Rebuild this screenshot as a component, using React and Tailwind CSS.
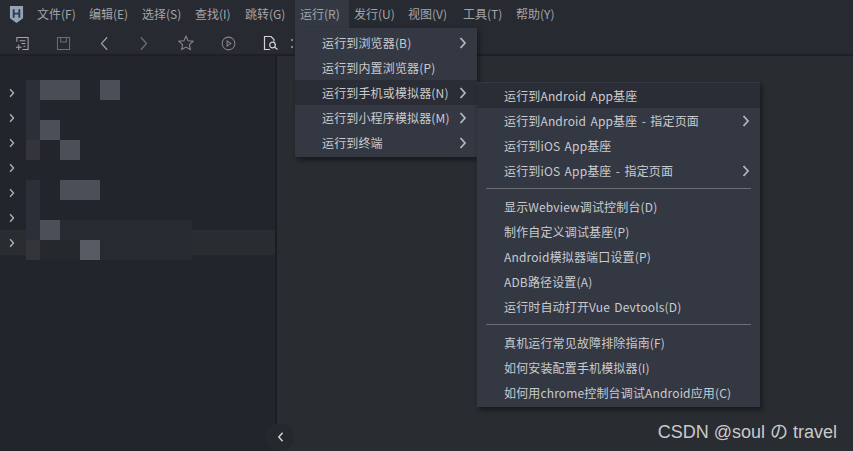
import React from 'react';

const cjk = 'font-["Noto_Sans_CJK_SC","Noto_Sans",sans-serif]';

const menus = [
  { label: '文件(F)', w: 'w-[52px]' },
  { label: '编辑(E)', w: 'w-[53px]' },
  { label: '选择(S)', w: 'w-[53px]' },
  { label: '查找(I)', w: 'w-[50px]' },
  { label: '跳转(G)', w: 'w-[55px]' },
  { label: '运行(R)', w: 'w-[54px]', active: true },
  { label: '发行(U)', w: 'w-[54px]' },
  { label: '视图(V)', w: 'w-[55px]' },
  { label: '工具(T)', w: 'w-[53px]' },
  { label: '帮助(Y)', w: 'w-[54px]' },
];

const runMenu = [
  { label: '运行到浏览器(B)', sub: true },
  { label: '运行到内置浏览器(P)' },
  { label: '运行到手机或模拟器(N)', sub: true, active: true },
  { label: '运行到小程序模拟器(M)', sub: true },
  { label: '运行到终端', sub: true },
];

const deviceMenu = [
  [
    { label: '运行到Android App基座', active: true },
    { label: '运行到Android App基座 - 指定页面', sub: true },
    { label: '运行到iOS App基座' },
    { label: '运行到iOS App基座 - 指定页面', sub: true },
  ],
  [
    { label: '显示Webview调试控制台(D)' },
    { label: '制作自定义调试基座(P)' },
    { label: 'Android模拟器端口设置(P)' },
    { label: 'ADB路径设置(A)' },
    { label: '运行时自动打开Vue Devtools(D)' },
  ],
  [
    { label: '真机运行常见故障排除指南(F)' },
    { label: '如何安装配置手机模拟器(I)' },
    { label: '如何用chrome控制台调试Android应用(C)' },
  ],
];

// 打码色块，每格 20px
const mosaic = [
  ['d', 'b', 'b', '', 'l', '', '', '', ''],
  ['d', '', '', '', '', '', '', '', ''],
  ['d', 'l', '', '', '', '', '', '', ''],
  ['e', '', 'l', '', '', '', '', '', ''],
  ['', '', '', '', '', '', '', '', ''],
  ['d', '', 'l', 'l', '', '', '', '', ''],
  ['d', '', '', '', '', '', '', '', ''],
  ['d', 'l', 'f', 'f', 'f', 'f', 'f', 'f', 'f'],
  ['e', 'g', 'g', 'h', 'f', 'f', 'f', 'f', 'f'],
];

const cellClass = {
  '': 'bg-transparent',
  b: 'bg-[#4a4d55]',
  l: 'bg-[#4c4f57]',
  h: 'bg-[#585b63]',
  d: 'bg-[#2c2f38]',
  e: 'bg-[#33353a]',
  f: 'bg-[#272a30]',
  g: 'bg-[#25282d]',
};

const Chevron = ({ className = '', dir = 'right', weight = 1.8 }) => (
  <svg viewBox="0 0 8 12" className={className} fill="none" stroke="currentColor" strokeWidth={weight}>
    <path d={dir === 'right' ? 'M1.5 1l4.5 5-4.5 5' : 'M6.5 1L2 6l4.5 5'} />
  </svg>
);

const Logo = () => (
  <svg viewBox="0 0 16 20" className="w-[15px] h-[19px]">
    <path d="M1 1h14v13l-7 5-7-5z" fill="#94a3b8" />
    <path d="M5 4.5v9M11 4.5v9M5 9h6" stroke="#2c3a4e" strokeWidth="2" fill="none" />
  </svg>
);

const ToolIcons = () => (
  <div className="flex items-center h-[26px] mt-[2px] text-[#a5a7ab]">
    <svg viewBox="0 0 16 16" className="w-[15px] h-[15px] ml-[15px]" fill="none" stroke="currentColor" strokeWidth="1.1">
      <path d="M2 6V1.5h12v13H8M5 5h6M7 8h4M9 11h2M1 12h6M4 9v6" />
    </svg>
    <svg viewBox="0 0 16 16" className="w-[15px] h-[15px] ml-[26px] text-[#6d6f74]" fill="none" stroke="currentColor" strokeWidth="1.1">
      <path d="M1.5 1.5h13v13h-13zM5 1.5v5h6v-5" />
    </svg>
    <Chevron className="w-[10px] h-[15px] ml-[28px] text-[#9a9ca0]" dir="left" weight={1} />
    <Chevron className="w-[10px] h-[15px] ml-[30px] text-[#6d6f74]" weight={1} />
    <svg viewBox="0 0 16 16" className="w-[16px] h-[16px] ml-[29px] text-[#85878b]" fill="none" stroke="currentColor" strokeWidth="1.1">
      <path d="M8 1.2l2.1 4.5 4.9.6-3.6 3.3.9 4.9L8 12.1l-4.3 2.4.9-4.9L1 6.3l4.9-.6z" />
    </svg>
    <svg viewBox="0 0 16 16" className="w-[15px] h-[15px] ml-[27px] text-[#85878b]" fill="none" stroke="currentColor" strokeWidth="1.1">
      <circle cx="8" cy="8" r="6.8" />
      <path d="M6.5 5.2L10.5 8l-4 2.8z" />
    </svg>
    <svg viewBox="0 0 16 16" className="w-[16px] h-[16px] ml-[27px] text-[#d0d2d6]" fill="none" stroke="currentColor" strokeWidth="1.2">
      <path d="M7 14.5H1.5v-13H8l3 3v2" />
      <circle cx="9.5" cy="10" r="2.8" />
      <path d="M11.5 12l3 2.5" />
    </svg>
    <span className="ml-[12px] w-[2px] h-[9px] border-y-2 border-[#85878b]" />
  </div>
);

const MenuItem = ({ item }) => (
  <div className={`flex items-center h-[25px] pl-[27px] pr-[10px] text-[12px] text-[#c9cbcf] whitespace-nowrap ${item.active ? 'bg-[#2a2d35]' : ''}`}>
    <span className="flex-1 tracking-[0.15px] [word-spacing:1.5px]">{item.label}</span>
    {item.sub && <Chevron className="w-[8px] h-[12px] text-[#b4b6ba]" />}
  </div>
);

export default function App() {
  return (
    <div className={`w-[853px] h-[451px] overflow-hidden relative flex flex-col bg-[#292c31] ${cjk}`}>
      {/* 菜单栏 */}
      <div className="flex items-center h-[28px] bg-[#272a31] shrink-0">
        <div className="w-[32px] flex justify-center pl-[1px]">
          <Logo />
        </div>
        {menus.map((m) => (
          <div key={m.label} className={`${m.w} h-full flex items-center pl-[5px] text-[12px] text-[#a3a5a9] whitespace-nowrap ${m.active ? 'bg-[#343843]' : ''}`}>
            {m.label}
          </div>
        ))}
      </div>

      {/* 工具栏 */}
      <div className="h-[28px] bg-[#272a31] border-b-2 border-[#1e2025] shrink-0">
        <ToolIcons />
      </div>

      <div className="flex flex-1 min-h-0">
        {/* 左侧项目树 */}
        <div className="w-[277px] shrink-0 bg-[#22252b] border-r-2 border-[#1b1d22] grid">
          <div className="[grid-area:1/1] pt-[24px]">
            {[0, 1, 2, 3, 4, 5, 6].map((i) => (
              <div key={i} className={`h-[25px] flex items-center pl-[9px] text-[#b0b2b6] ${i === 6 ? 'bg-[#292c31]' : ''}`}>
                <Chevron className="w-[6px] h-[10px]" />
              </div>
            ))}
          </div>
          <div className="[grid-area:1/1] pt-[24px] pl-[26px]">
            <div className="grid grid-cols-[14px_20px_20px_20px_20px_20px_20px_20px_12px] auto-rows-[20px] w-fit">
              {mosaic.flat().map((c, i) => (
                <div key={i} className={cellClass[c]} />
              ))}
            </div>
          </div>
        </div>
        <div className="flex-1" />
      </div>

      {/* 折叠按钮 */}
      <div className="absolute left-[266px] top-[423px] w-[28px] h-[28px] rounded-full bg-[#25282d] flex items-center justify-center text-[#d0d2d6]">
        <Chevron className="w-[7px] h-[10px]" dir="left" />
      </div>

      {/* 运行菜单 */}
      <div className="absolute left-[295px] top-[28px] w-[182px] pt-[2px] pb-[2px] bg-[#343843] shadow-[2px_3px_5px_rgba(0,0,0,0.45)]">
        {runMenu.map((item) => (
          <MenuItem key={item.label} item={item} />
        ))}
      </div>

      {/* 手机或模拟器子菜单 */}
      <div className="absolute left-[477px] top-[82px] w-[283px] pt-[1px] pb-[2px] bg-[#343843] shadow-[2px_3px_5px_rgba(0,0,0,0.45)]">
        {deviceMenu.map((group, i) => (
          <div key={i}>
            {i > 0 && <div className="mx-[9px] my-[5px] h-[1px] bg-[#6a6d74]" />}
            {group.map((item) => (
              <MenuItem key={item.label} item={item} />
            ))}
          </div>
        ))}
      </div>

      {/* 水印 */}
      <div className={`absolute right-[16px] top-[422px] text-[18px] leading-[20px] text-[#c9cacc] whitespace-nowrap font-["Liberation_Sans","Noto_Sans_CJK_JP",sans-serif]`}>
        CSDN @soul の travel
      </div>
    </div>
  );
}
